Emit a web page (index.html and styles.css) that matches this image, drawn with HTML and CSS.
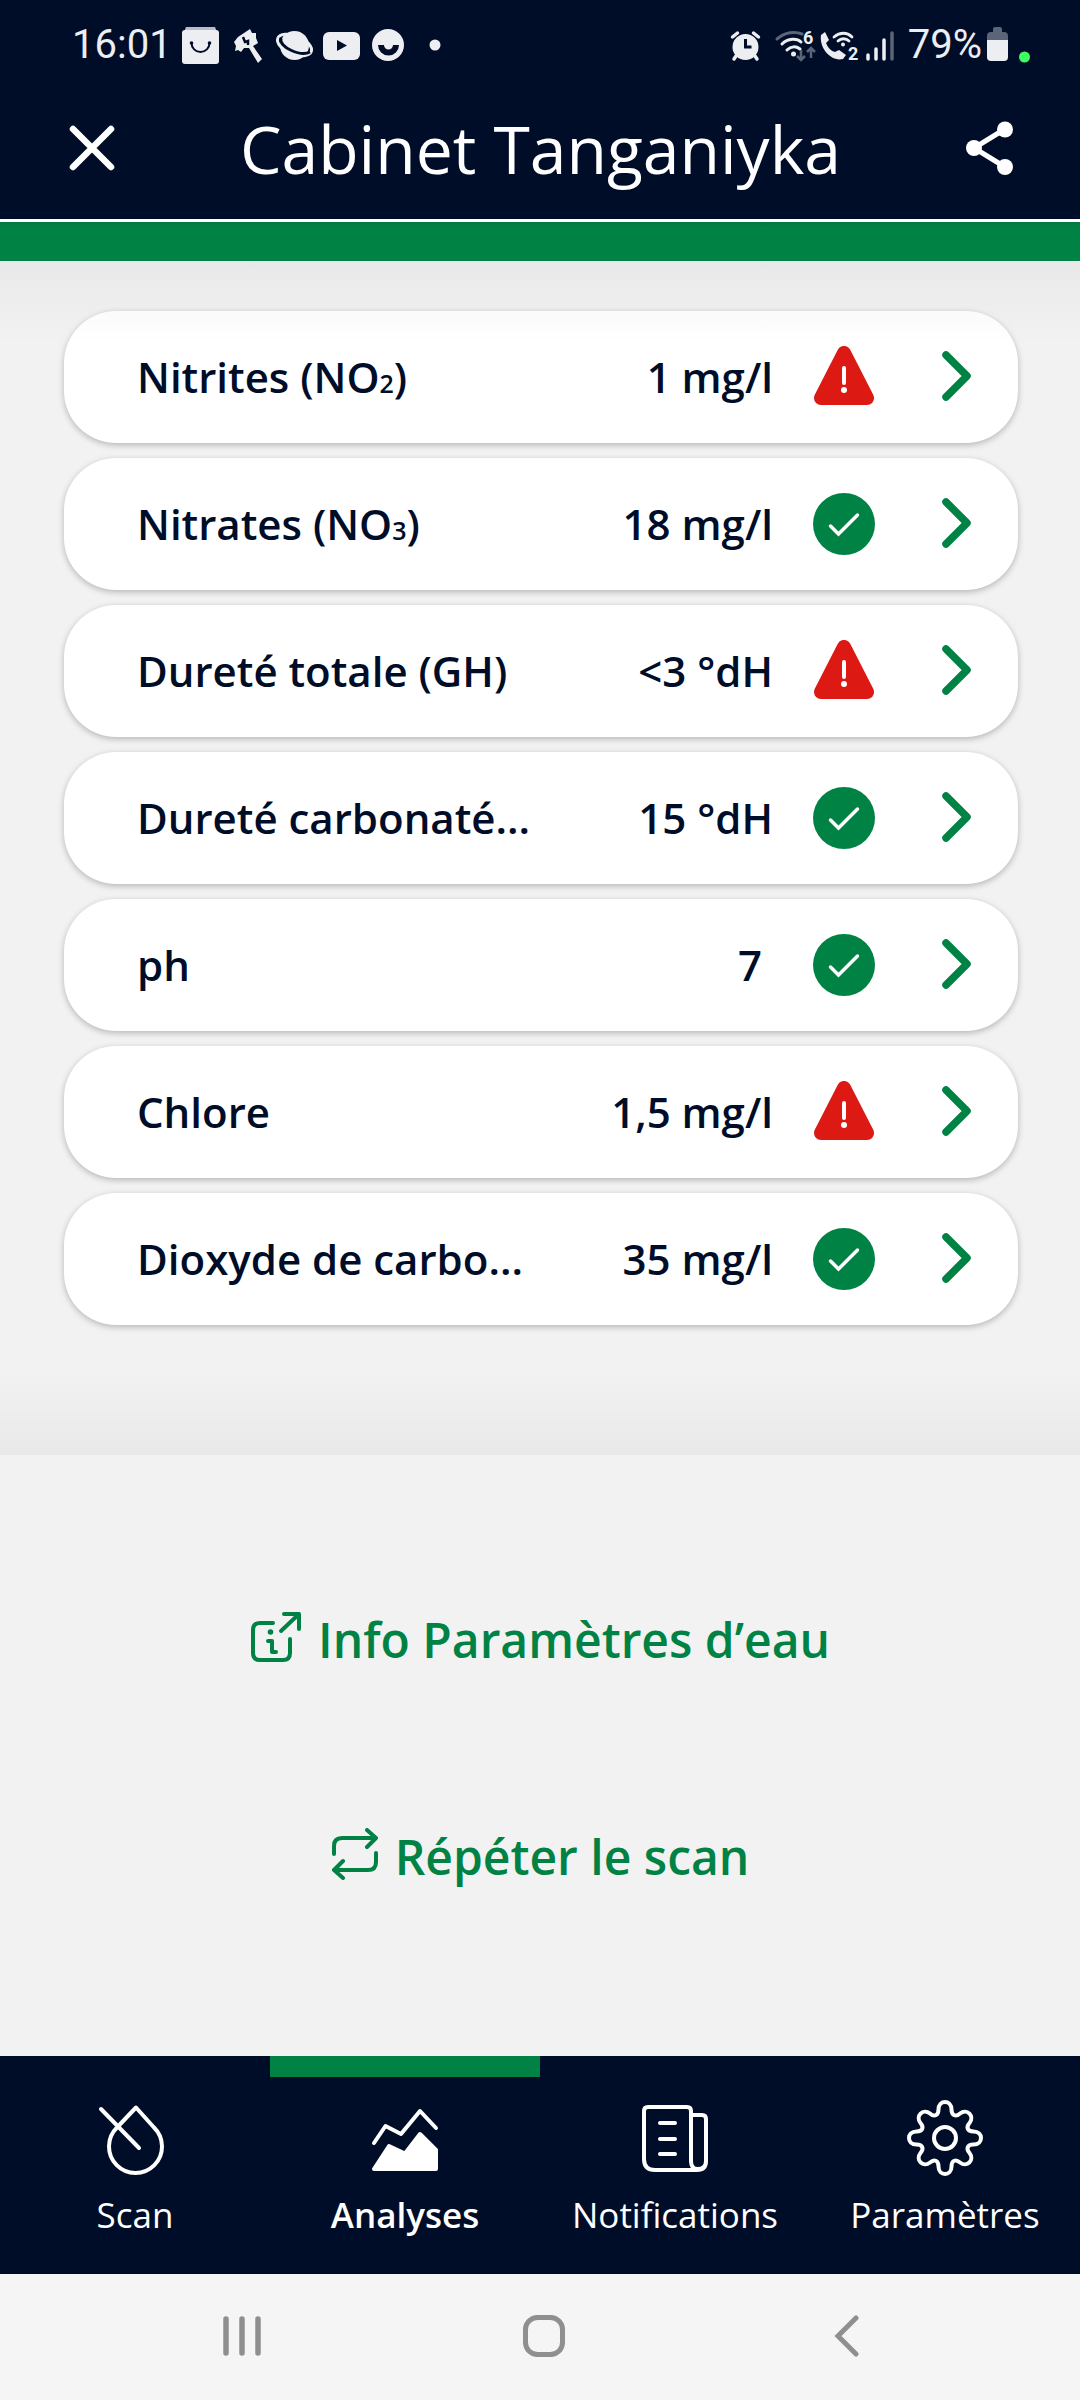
FILE: index.html
```html
<!DOCTYPE html>
<html lang="fr">
<head>
<meta charset="utf-8">
<meta name="viewport" content="width=device-width, initial-scale=1">
<title>Cabinet Tanganiyka</title>
<link rel="stylesheet" href="styles.css">
</head>
<body>
<svg class="sprite" aria-hidden="true">
  <symbol id="alert" viewBox="0 0 62 62">
    <path d="M31 7 54 52H8Z" fill="#dc1912" stroke="#dc1912" stroke-width="14" stroke-linejoin="round"/>
    <path d="M31 22 31 37" stroke="#fff" stroke-width="4" stroke-linecap="round"/>
    <circle cx="31" cy="44" r="3" fill="#fff"/>
  </symbol>
  <symbol id="ok" viewBox="0 0 62 62">
    <circle cx="31" cy="31" r="31" fill="#008244"/>
    <path d="M17.500 33 25.500 41 44.500 22" fill="none" stroke="#fff" stroke-width="3.500" stroke-linecap="round"/>
  </symbol>
  <symbol id="chevron" viewBox="0 0 30 52">
    <path d="M4 4 25 25 4 46" fill="none" stroke="#008244" stroke-width="7.500" stroke-linecap="round" stroke-linejoin="round"/>
  </symbol>
</svg>
<div class="app">
  <header class="top">
    <div class="status">
      <div class="status-group">
        <span class="clock">16:01</span>
        <svg class="notices" viewBox="180 24 264 42" width="264" height="42" aria-hidden="true">
          <path d="M186 27h29l2 5h-33z" fill="#b9bdc6"/>
          <rect x="182" y="30" width="37" height="34" rx="3" fill="#eceef2"/>
          <path d="M191.500 43a9 9 0 0 0 18 0" fill="none" stroke="#000d28" stroke-width="2"/>
          <circle cx="191.500" cy="43" r="1.800" fill="#000d28"/><circle cx="209.500" cy="43" r="1.800" fill="#000d28"/>
          <path d="M234 42 238 37 250 29 252 33 256 33 256 38 258 43 253 46 262 59 258 63 249 48 244 48 241 52 238 50 235 51 236 46Z" fill="#eceef2"/>
          <path d="M243 37 245 42 248 41 248 45" stroke="#000d28" stroke-width="2.500" fill="none"/>
          <circle cx="294.500" cy="45.500" r="14.500" fill="#eceef2"/>
          <ellipse cx="294.500" cy="45" rx="18" ry="9" transform="rotate(22 294.500 45)" fill="none" stroke="#eceef2" stroke-width="3"/>
          <path d="M281 38c-3 9 20 19 29 14" fill="none" stroke="#000d28" stroke-width="3"/>
          <rect x="323" y="32" width="37" height="28" rx="6" fill="#eceef2"/>
          <path d="M337 40v11l10-5.500z" fill="#000d28"/>
          <circle cx="388" cy="45" r="16" fill="#eceef2"/>
          <path d="M378 45h6a4.500 4.500 0 0 0 9 0h6a10.500 10.500 0 0 1-21 0z" fill="#000d28"/>
          <circle cx="435" cy="45" r="5.500" fill="#eceef2"/>
        </svg>
      </div>
      <div class="status-group">
        <svg class="signals" viewBox="730 26 166 38" width="166" height="38">
          <circle cx="745.500" cy="47" r="13" fill="#eceef2"/>
          <path d="M732.500 37l5-4M758.500 37l-5-4M736 56l-2 3M755 56l2 3" stroke="#eceef2" stroke-width="3.500" stroke-linecap="round"/>
          <path d="M745.500 39v8h6" fill="none" stroke="#000d28" stroke-width="3"/>
          <path d="M777 39c8-7 18-8 25-5" fill="none" stroke="#5c6477" stroke-width="3" stroke-linecap="round"/>
          <path d="M782 44c6-6 15-6 19-2M787 50c4-4 9-4 13-1" fill="none" stroke="#eceef2" stroke-width="3" stroke-linecap="round"/>
          <circle cx="793.500" cy="54" r="2.500" fill="#eceef2"/>
          <path d="M801 50v10m-4-4 4 4 4-4M811 58v-10m-4 4 4-4 4 4" fill="none" stroke="#5c6477" stroke-width="2.500"/>
          <text x="803" y="44" class="badge">6</text>
          <path d="M821 35l4-3 4 8-3 3c2 5 5 8 9 9l4-2 7 5-3 4c-12 3-24-11-22-24z" fill="#eceef2"/>
          <path d="M834 37c6-5 13-5 18 0M838 41c3-3 8-3 11 0" fill="none" stroke="#eceef2" stroke-width="2.800" stroke-linecap="round"/>
          <circle cx="843" cy="44.500" r="2" fill="#eceef2"/>
          <text x="848" y="60" class="badge">2</text>
          <path d="M868 55v4M876 49v10M884 40v19" stroke="#eceef2" stroke-width="3.500" stroke-linecap="round"/>
          <path d="M892 33v26" stroke="#5c6477" stroke-width="3.500" stroke-linecap="round"/>
        </svg>
        <span class="percent">79%</span>
        <svg viewBox="986 28 46 38" width="46" height="38" aria-hidden="true">
          <path d="M987 43v-5q0-4 4-4h2v-3q0-2 2-2h5q2 0 2 2v3h2q4 0 4 4v5z" fill="#5c6477"/>
          <path d="M987 42h21v17q0 4-4 4h-13q-4 0-4-4z" fill="#eceef2"/>
          <circle cx="1024.500" cy="59" r="5.500" fill="#40fc64"/>
        </svg>
      </div>
    </div>
    <div class="titlebar">
      <button class="icon-button" aria-label="Fermer">
        <svg viewBox="0 0 46 46" width="46" height="46"><path d="M4 4 42 42M42 4 4 42" stroke="#fff" stroke-width="6.500" stroke-linecap="round"/></svg>
      </button>
      <h1 class="title">Cabinet Tanganiyka</h1>
      <button class="icon-button" aria-label="Partager">
        <svg viewBox="0 0 48 54" width="48" height="54"><path d="M39 8 8 27 39 46" fill="none" stroke="#fff" stroke-width="5"/><circle cx="39" cy="8.500" r="8" fill="#fff"/><circle cx="8" cy="27" r="8" fill="#fff"/><circle cx="39" cy="46" r="8" fill="#fff"/></svg>
      </button>
    </div>
  </header>
  <main class="content">
    <div class="band"></div>
    <div class="panel">
      <ul class="results">
        <li><button class="card"><span class="name">Nitrites (NO<span class="sub">2</span>)</span><span class="value">1 mg/l</span><svg class="state" aria-label="Alerte"><use href="#alert"/></svg><svg class="go" aria-hidden="true"><use href="#chevron"/></svg></button></li>
        <li><button class="card"><span class="name">Nitrates (NO<span class="sub">3</span>)</span><span class="value">18 mg/l</span><svg class="state" aria-label="Correct"><use href="#ok"/></svg><svg class="go" aria-hidden="true"><use href="#chevron"/></svg></button></li>
        <li><button class="card"><span class="name">Dureté totale (GH)</span><span class="value">&lt;3 °dH</span><svg class="state" aria-label="Alerte"><use href="#alert"/></svg><svg class="go" aria-hidden="true"><use href="#chevron"/></svg></button></li>
        <li><button class="card"><span class="name">Dureté carbonaté...</span><span class="value">15 °dH</span><svg class="state" aria-label="Correct"><use href="#ok"/></svg><svg class="go" aria-hidden="true"><use href="#chevron"/></svg></button></li>
        <li><button class="card"><span class="name">ph</span><span class="value">7 </span><svg class="state" aria-label="Correct"><use href="#ok"/></svg><svg class="go" aria-hidden="true"><use href="#chevron"/></svg></button></li>
        <li><button class="card"><span class="name">Chlore</span><span class="value">1,5 mg/l</span><svg class="state" aria-label="Alerte"><use href="#alert"/></svg><svg class="go" aria-hidden="true"><use href="#chevron"/></svg></button></li>
        <li><button class="card"><span class="name">Dioxyde de carbo...</span><span class="value">35 mg/l</span><svg class="state" aria-label="Correct"><use href="#ok"/></svg><svg class="go" aria-hidden="true"><use href="#chevron"/></svg></button></li>
      </ul>
    </div>
    <div class="actions">
      <a class="action" href="#info">
        <svg viewBox="0 0 52 52" width="52" height="52" aria-hidden="true"><g fill="none" stroke="#008244" stroke-width="4" stroke-linecap="round" stroke-linejoin="round"><path d="M23 12H10Q3 12 3 19V42Q3 49 10 49H33Q40 49 40 42V28"/><path d="M31 20 49 3M34 3H49V18M18 30H22V41M22 41H26"/></g><circle cx="20.500" cy="21" r="2.800" fill="#008244"/></svg>
        Info Paramètres d’eau
      </a>
      <a class="action" href="#scan">
        <svg viewBox="0 0 48 52" width="48" height="52" aria-hidden="true"><g fill="none" stroke="#008244" stroke-width="4" stroke-linecap="round" stroke-linejoin="round"><path d="M3 26V18Q3 10 11 10H45M36 2 45 10 36 19"/><path d="M45 25V34Q45 42 37 42H3M12 33 3 42 12 50"/></g></svg>
        Répéter le scan
      </a>
    </div>
  </main>
  <nav class="tabs">
    <a class="tab" href="#scan">
      <svg viewBox="0 0 76 76" width="76" height="76"><path d="M57 27.500A26.500 26.500 0 1 1 20 27.500L39 7.500ZM4 9 42 48" fill="none" stroke="#fff" stroke-width="4" stroke-linecap="round" stroke-linejoin="round"/></svg>
      <span>Scan</span>
    </a>
    <a class="tab active" href="#analyses" aria-current="page">
      <svg viewBox="0 0 76 76" width="76" height="76"><path d="M7 43 18.500 26 34 34 53 11 69 28" fill="none" stroke="#fff" stroke-width="4" stroke-linecap="round" stroke-linejoin="round"/><path d="M7 69 22 46 38 53.500 53 34 69 50V69Z" fill="#fff" stroke="#fff" stroke-width="4" stroke-linejoin="round"/></svg>
      <span>Analyses</span>
    </a>
    <a class="tab" href="#notifications">
      <svg viewBox="0 0 76 76" width="76" height="76"><path d="M54 62V11Q54 7 50 7H11Q7 7 7 11V59Q7 70 18 70H60Q69 70 69 61V19Q69 15 65 15H54M54 61Q54 69 60.500 69 69 69 69 61M23 23H38M23 39H38M23 54H38" fill="none" stroke="#fff" stroke-width="4" stroke-linecap="round" stroke-linejoin="round"/></svg>
      <span>Notifications</span>
    </a>
    <a class="tab" href="#parametres">
      <svg viewBox="0 0 76 76" width="76" height="76"><g fill="none" stroke="#fff" stroke-width="4"><circle cx="38" cy="38" r="11"/><path d="M31.500 9.500C31.500-.5 44.500-.5 44.500 9.500 44.500 16 49 17 53 13.500 60 8 68 16 62.500 23 59 27 60 31.500 66.500 31.500 76.500 31.500 76.500 44.500 66.500 44.500 60 44.500 59 49 62.500 53 68 60 60 68 53 62.500 49 59 44.500 60 44.500 66.500 44.500 76.500 31.500 76.500 31.500 66.500 31.500 60 27 59 23 62.500 16 68 8 60 13.500 53 17 49 16 44.500 9.500 44.500-.5 44.500-.5 31.500 9.500 31.500 16 31.500 17 27 13.500 23 8 16 16 8 23 13.500 27 17 31.500 16 31.500 9.500Z"/></g></svg>
      <span>Paramètres</span>
    </a>
  </nav>
  <div class="system">
    <button class="icon-button" aria-label="Applications récentes"><svg viewBox="0 0 42 42" width="42" height="42"><path d="M5 4V38M21 4V38M37 4V38" stroke="#8f8f8f" stroke-width="5.500" stroke-linecap="round"/></svg></button>
    <button class="icon-button" aria-label="Accueil"><svg viewBox="0 0 42 42" width="42" height="42"><rect x="2.500" y="2.500" width="37" height="37" rx="12" fill="none" stroke="#8f8f8f" stroke-width="5"/></svg></button>
    <button class="icon-button" aria-label="Retour"><svg viewBox="0 0 42 42" width="42" height="42"><path d="M31 3 13 21 31 39" fill="none" stroke="#8f8f8f" stroke-width="5" stroke-linecap="round"/></svg></button>
  </div>
</div>
</body>
</html>
```

FILE: styles.css
```css
* {
  box-sizing: border-box;
}

body {
  margin: 0;
  background: #f2f2f2;
  color: #000d28;
  font-family: "Open Sans", sans-serif;
}

svg {
  display: block;
  flex: none;
}

button {
  border: 0;
  padding: 0;
  background: none;
  color: inherit;
  font: inherit;
}

a {
  color: inherit;
  text-decoration: none;
}

.sprite {
  position: absolute;
  width: 0;
  height: 0;
}

.app {
  display: flex;
  flex-direction: column;
  min-height: 100vh;
}

.top {
  background: #000d28;
  color: #fff;
  border-bottom: 3px solid #fff;
}

.status {
  display: flex;
  justify-content: space-between;
  padding: 21px 48px 0 72px;
}

.status-group {
  display: flex;
  align-items: center;
  gap: 12px;
  height: 48px;
  color: #eceef2;
  font-family: Roboto, sans-serif;
  font-size: 40px;
  line-height: 48px;
}

.clock {
  margin-right: -4px;
}

.percent {
  margin-right: -8px;
}

.badge {
  fill: #eceef2;
  font-family: Roboto, sans-serif;
  font-size: 18px;
  font-weight: 700;
}

.titlebar {
  display: flex;
  align-items: center;
  justify-content: space-between;
  height: 150px;
  padding: 8px 66px 0 69px;
}

.title {
  margin: 0;
  font-size: 66px;
  font-weight: 400;
  line-height: 92px;
}

.content {
  flex: 1;
}

.band {
  height: 39px;
  background: linear-gradient(#047840, #008244 6px);
}

.panel {
  position: relative;
  padding: 50px 62px 130px 64px;
}

/* Soft shade along the top and bottom edges, over the cards */
.panel::after {
  content: "";
  position: absolute;
  inset: 0;
  pointer-events: none;
  background:
    linear-gradient(rgba(0, 0, 0, 0.04), transparent) top / 100% 84px no-repeat,
    linear-gradient(transparent, rgba(0, 0, 0, 0.04)) bottom / 100% 84px no-repeat;
}

.results {
  display: flex;
  flex-direction: column;
  gap: 15px;
  margin: 0;
  padding: 0;
  list-style: none;
}

.card {
  display: flex;
  align-items: center;
  width: 100%;
  height: 132px;
  padding: 0 46px 0 73px;
  border-radius: 52px;
  background: #fff;
  box-shadow: 0 2px 6px rgba(0, 0, 0, 0.25);
  font-size: 42px;
  font-weight: 600;
  line-height: 58px;
}

.name {
  flex: 1;
  text-align: left;
}

.sub {
  font-size: 25px;
  line-height: 1;
}

.value {
  margin-right: 40px;
  white-space: pre;
}

.state {
  width: 62px;
  height: 62px;
  margin-right: 67px;
}

.go {
  width: 30px;
  height: 52px;
}

.actions {
  display: flex;
  flex-direction: column;
  align-items: center;
  gap: 152px;
  padding: 152px 0;
}

.action {
  display: flex;
  align-items: center;
  gap: 16px;
  color: #008244;
  font-size: 48px;
  font-weight: 600;
  line-height: 65px;
}

.action svg {
  margin-bottom: 6px;
}

.tabs {
  display: grid;
  grid-template-columns: repeat(4, 1fr);
  background: #000d28;
  color: #fff;
}

.tab {
  display: flex;
  flex-direction: column;
  align-items: center;
  gap: 15px;
  height: 218px;
  padding-top: 23px;
  border-top: 21px solid transparent;
  font-size: 35px;
  line-height: 48px;
}

.tab.active {
  border-top-color: #008244;
  font-weight: 600;
}

.system {
  display: flex;
  align-items: center;
  justify-content: center;
  gap: 260px;
  height: 126px;
  padding: 0 0 2px 8px;
  background: #f5f5f5;
}
```
